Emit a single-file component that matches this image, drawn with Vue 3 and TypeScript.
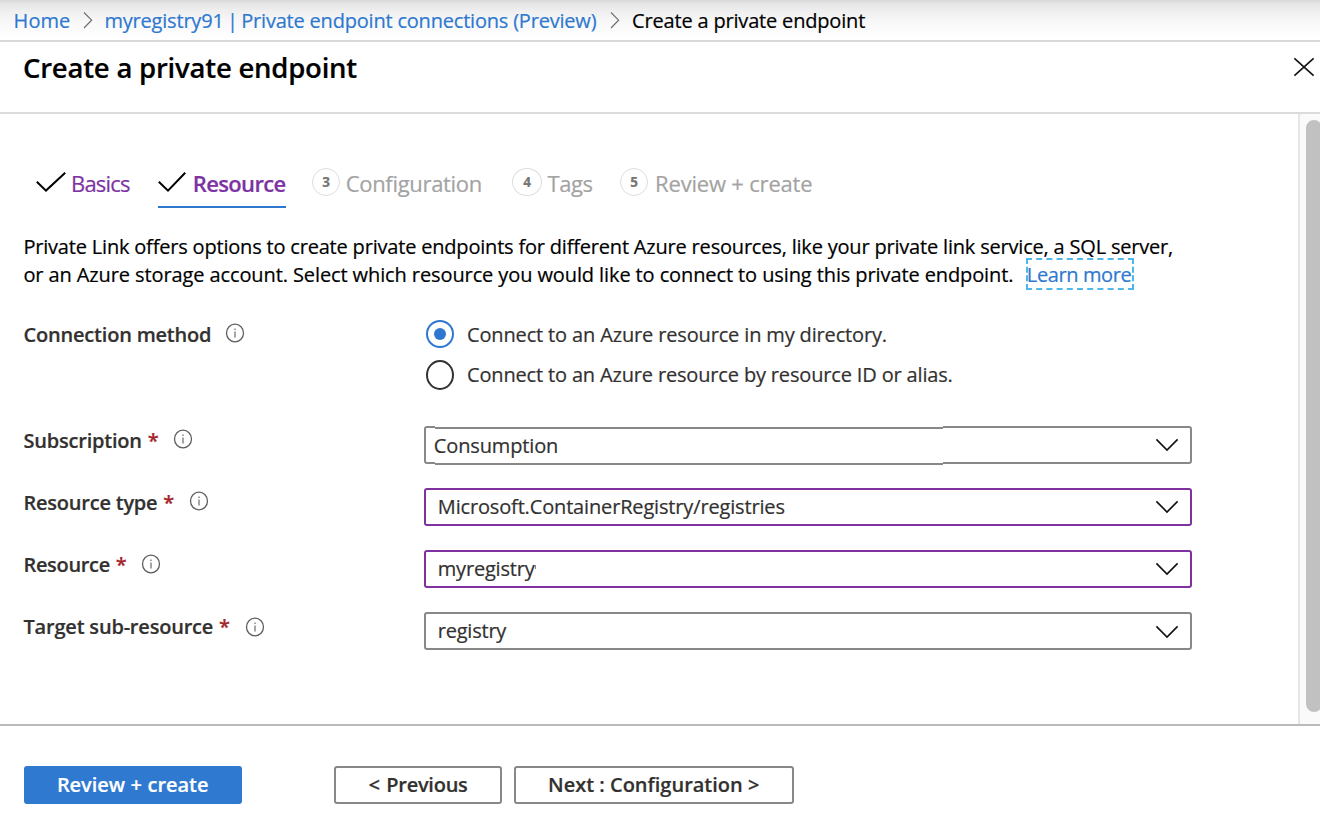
<script setup lang="ts">
import { ref } from 'vue'

interface Tab {
  key: string
  label: string
  state: 'done' | 'active' | 'todo'
  step: number
}

interface Field {
  key: string
  label: string
  value: string
  edited: boolean
}

const tabs: Tab[] = [
  { key: 'basics', label: 'Basics', state: 'done', step: 1 },
  { key: 'resource', label: 'Resource', state: 'active', step: 2 },
  { key: 'configuration', label: 'Configuration', state: 'todo', step: 3 },
  { key: 'tags', label: 'Tags', state: 'todo', step: 4 },
  { key: 'review', label: 'Review + create', state: 'todo', step: 5 },
]

const methods = [
  { key: 'directory', label: 'Connect to an Azure resource in my directory.' },
  { key: 'alias', label: 'Connect to an Azure resource by resource ID or alias.' },
]
const method = ref('directory')

const fields: Field[] = [
  { key: 'subscription', label: 'Subscription', value: 'Consumption', edited: false },
  { key: 'type', label: 'Resource type', value: 'Microsoft.ContainerRegistry/registries', edited: true },
  { key: 'name', label: 'Resource', value: 'myregistry', edited: true },
  { key: 'target', label: 'Target sub-resource', value: 'registry', edited: false },
]
</script>

<template>
  <div class="page">
    <nav class="crumbs">
      <a class="crumb home">Home</a>
      <svg class="sep" width="10" height="18" viewBox="0 0 10 18"><path d="M1 1.5 L8.6 9.2 L1 17" /></svg>
      <a class="crumb registry">myregistry91 <span class="pipe">|</span> Private endpoint connections (Preview)</a>
      <svg class="sep second" width="10" height="18" viewBox="0 0 10 18"><path d="M1 1.5 L8.6 9.2 L1 17" /></svg>
      <span class="crumb here">Create a private endpoint</span>
    </nav>

    <header class="title-bar">
      <h1>Create a private endpoint</h1>
      <svg class="close" width="22" height="20" viewBox="0 0 22 20"><path d="M1.4 1.4 L20.6 18.6 M20.6 1.4 L1.4 18.6" /></svg>
    </header>

    <div class="body">
      <main class="content">
        <div class="tabs">
          <div v-for="t in tabs" :key="t.key" class="tab" :class="[t.state, t.key]">
            <svg v-if="t.state !== 'todo'" class="check" width="30" height="30" viewBox="0 0 30 30">
              <path v-if="t.key === 'basics'" d="M0.8 13.8 L10 22.6 L29.2 4.8" />
              <path v-else d="M0.8 13.8 L10 22.6 L27.2 4.8" />
            </svg>
            <span v-else class="step">{{ t.step }}</span>
            <span class="tab-label">{{ t.label }}</span>
          </div>
        </div>

        <p class="intro">
          <span class="line one">Private Link offers options to create private endpoints for different Azure resources, like your private link service, a SQL server,</span>
          <span class="line two">or an Azure storage account. Select which resource you would like to connect to using this private endpoint.<a class="learn">Learn more</a></span>
        </p>

        <div class="row method-row">
          <div class="label connection">
            <span class="label-text">Connection method</span>
            <svg class="info" width="20" height="20" viewBox="0 0 20 20">
              <ellipse cx="10" cy="10" rx="8.5" ry="8.8" />
              <path d="M10 8.6 V14.4 M10 5.4 V6.9" />
            </svg>
          </div>
          <div class="options">
            <label v-for="m in methods" :key="m.key" class="option" :class="m.key" @click="method = m.key">
              <span class="radio" :class="{ on: method === m.key }"></span>
              <span class="option-text">{{ m.label }}</span>
            </label>
          </div>
        </div>

        <div v-for="f in fields" :key="f.key" class="row" :class="'row-' + f.key">
          <div class="label" :class="f.key">
            <span class="label-text">{{ f.label }}</span>
            <span class="star">*</span>
            <svg class="info" width="20" height="20" viewBox="0 0 20 20">
              <ellipse cx="10" cy="10" rx="8.5" ry="8.8" />
              <path d="M10 8.6 V14.4 M10 5.4 V6.9" />
            </svg>
          </div>
          <div class="select" :class="[f.key, { edited: f.edited }]">
            <span class="value">{{ f.value }}</span>
            <svg class="chev" width="24" height="14" viewBox="0 0 24 14"><path d="M1.4 1.4 L12 12 L22.6 1.4" /></svg>
          </div>
        </div>
      </main>
      <div class="track"><div class="thumb"></div></div>
    </div>

    <footer class="footer">
      <button class="btn primary">Review + create</button>
      <button class="btn prev">&lt; Previous</button>
      <button class="btn next">Next : Configuration &gt;</button>
    </footer>
  </div>
</template>

<style>
body {
  background: #fff;
  overflow: hidden;
}
</style>

<style scoped>
.page {
  box-sizing: border-box;
  width: 1320px;
  height: 820px;
  display: flex;
  flex-direction: column;
  overflow: hidden;
  background: #fff;
  color: #000;
  font: 400 20px/27px "Open Sans", "Noto Sans", sans-serif;
  -webkit-text-stroke: 0.2px currentColor;
}
.page * {
  box-sizing: border-box;
}
svg {
  display: block;
  flex: none;
  fill: none;
}

/* Breadcrumb */
.crumbs {
  height: 42px;
  flex: none;
  display: flex;
  align-items: flex-start;
  padding: 7px 0 0 13.6px;
  border-bottom: 2px solid #d9d9d9;
  background: linear-gradient(#d6d6d6 0, #e4e4e4 3px, #eeeeee 10px, #f8f8f8 22px, #fefefe 36px, #fff 40px);
  white-space: nowrap;
}
.crumb {
  flex: none;
}
a {
  color: #2e78d0;
}
.home {
  width: 56.8px;
  letter-spacing: 0.05px;
}
.registry {
  width: 491.6px;
  letter-spacing: -0.2px;
}
.pipe {
  margin: 0 -1.6px;
}
.here {
  letter-spacing: -0.181px;
}
.sep {
  margin: 4px 11.7px 0 12.4px;
  stroke: #6e6e6e;
  stroke-width: 1.2;
}
.sep.second {
  margin: 4px 12.5px 0 13.5px;
}

/* Title */
.title-bar {
  height: 72px;
  flex: none;
  display: flex;
  justify-content: space-between;
  padding: 7px 5px 0 23px;
  border-bottom: 2px solid #dbdbdb;
}
h1 {
  margin: 0;
  font-size: 27.5px;
  line-height: 37px;
  font-weight: 600;
  letter-spacing: -0.222px;
}
.close {
  margin-top: 8px;
  stroke: #111;
  stroke-width: 1.6;
}

/* Scrolling area */
.body {
  height: 610px;
  flex: none;
  display: flex;
}
.content {
  width: 1298px;
  padding-top: 54px;
}
.track {
  width: 22px;
  padding: 6px 0 0 6px;
  border-left: 2px solid #e6e6e6;
  background: #fafafa;
  overflow: hidden;
}
.thumb {
  width: 16px;
  height: 592px;
  border-radius: 8px;
  background: #c1c1c1;
}

/* Tabs */
.tabs {
  display: grid;
  grid-template-columns: 122px 154px 200px 108px auto;
  justify-content: start;
  height: 40px;
  padding-left: 36px;
  font-size: 22px;
  line-height: 30px;
}
.tab {
  display: flex;
  align-items: flex-start;
  color: #a3a3a3;
  white-space: nowrap;
}
.tab.done,
.tab.active {
  color: #7d33a2;
}
.tab.active {
  width: 128px;
  height: 40px;
  border-bottom: 2px solid #2f78d0;
  font-weight: 600;
}
.check {
  stroke: #000;
  stroke-width: 2;
}
.basics .check {
  margin-right: 5.1px;
}
.basics {
  letter-spacing: -0.84px;
}
.resource .check {
  margin-right: 4.8px;
}
.tab.resource {
  letter-spacing: -0.64px;
}
.step {
  width: 28px;
  height: 28px;
  flex: none;
  border: 1.5px solid #dedede;
  border-radius: 50%;
  color: #767676;
  font-size: 13.5px;
  font-weight: 700;
  line-height: 26px;
  text-align: center;
  letter-spacing: 0;
}
.configuration .step {
  margin-right: 5.7px;
}
.configuration {
  letter-spacing: -0.31px;
}
.tags .step {
  width: 30px;
  margin-right: 5.6px;
}
.tags {
  letter-spacing: -0.45px;
}
.review .step {
  margin-right: 7.1px;
}
.review {
  letter-spacing: -0.19px;
}

/* Intro text */
.intro {
  margin: 25px 0 0;
  padding-left: 23.4px;
  line-height: 28px;
  white-space: nowrap;
}
.line {
  display: flex;
  height: 28px;
}
.one {
  letter-spacing: -0.191px;
}
.two {
  letter-spacing: -0.103px;
}
.learn {
  width: 104px;
  height: 28px;
  margin: -1px 0 0 14.6px;
  padding-top: 1px;
  line-height: 28px;
  text-indent: -1.2px;
  outline: 2px dashed #50b7ea;
  letter-spacing: -0.38px;
}

/* Form rows */
.row {
  display: grid;
  grid-template-columns: 424px 768px;
  height: 62px;
  color: #323130;
}
.method-row {
  height: 106px;
  margin-top: 31px;
}
.label {
  display: flex;
  align-items: flex-start;
  padding: 1px 0 0 23.5px;
  font-weight: 600;
  white-space: nowrap;
}
.connection .label-text {
  width: 188.3px;
  letter-spacing: -0.2px;
}
.connection .info {
  margin-left: 13.2px;
}
.subscription .label-text {
  letter-spacing: -0.22px;
}
.type .label-text {
  letter-spacing: -0.225px;
}
.name .label-text {
  letter-spacing: -0.34px;
}
.target .label-text {
  letter-spacing: -0.2px;
}
.star {
  width: 11px;
  margin-left: 5.9px;
  color: #a4262c;
}
.info {
  margin: 2px 0 0 14.2px;
  stroke: #605e5c;
  stroke-width: 1.3;
}
.info path {
  stroke: #8a8886;
  stroke-width: 1.5;
}
.type .info {
  margin-left: 15px;
}
.name .info {
  margin-top: 3px;
}
.target .info {
  margin: 4px 0 0 15px;
}

/* Radio options */
.options {
  display: flex;
  flex-direction: column;
  gap: 12px;
  padding-left: 2px;
}
.option {
  display: flex;
  align-items: flex-start;
  gap: 13px;
  height: 28px;
  white-space: nowrap;
}
.radio {
  width: 28px;
  height: 28px;
  flex: none;
  display: grid;
  place-items: center;
  border: 2px solid #323130;
  border-radius: 50%;
}
.alias .radio {
  height: 30px;
}
.radio.on {
  border-color: #2f78d0;
}
.radio.on::after {
  content: "";
  width: 12px;
  height: 12px;
  border-radius: 50%;
  background: #2f78d0;
}
.option-text {
  margin-top: 1px;
}
.directory {
  letter-spacing: -0.148px;
}
.alias {
  letter-spacing: -0.16px;
}

/* Drop-downs */
.select {
  position: relative;
  display: flex;
  justify-content: space-between;
  align-items: flex-start;
  height: 38px;
  padding: 3px 11px 0 11.8px;
  border: 2px solid #8a8886;
  border-radius: 3px;
  white-space: nowrap;
}
.select.edited {
  border-color: #8031a0;
}
.chev {
  margin-top: 7px;
  stroke: #111;
  stroke-width: 1.6;
}
.select.target .chev {
  margin-top: 8px;
}
.select.subscription {
  padding-left: 7.8px;
}
/* Inner strip of the subscription box, set one pixel lower than its frame */
.select.subscription::before {
  content: "";
  position: absolute;
  box-sizing: border-box;
  left: 9px;
  top: -1px;
  width: 508px;
  height: 38px;
  border: solid #8a8886;
  border-width: 2px 0;
  background: #fff;
  box-shadow: 0 -1px 0 #fff;
}
.select.subscription .value {
  position: relative;
  margin-top: 1px;
  letter-spacing: -0.135px;
}
.select.type .value {
  letter-spacing: -0.158px;
}
.select.name .value {
  position: relative;
  letter-spacing: -0.2px;
}
.select.name .value::after {
  content: "";
  position: absolute;
  left: 97px;
  top: 10px;
  width: 1px;
  height: 4px;
  background: #8a8886;
}
.select.target .value {
  letter-spacing: -0.23px;
}

/* Footer */
.footer {
  flex: 1;
  display: flex;
  align-items: flex-start;
  padding: 40px 0 0 24px;
  border-top: 2px solid #bababa;
}
.btn {
  height: 38px;
  padding: 3px 0 0;
  border: 2px solid #8a8886;
  border-radius: 3px;
  background: #fff;
  color: #323130;
  font: 600 20px/27px "Open Sans", "Noto Sans", sans-serif;
  text-align: left;
  white-space: nowrap;
  display: flex;
  align-items: flex-start;
}
.primary {
  width: 218px;
  padding-left: 30.9px;
  border-color: #3079d0;
  background: #3079d0;
  color: #fff;
  letter-spacing: -0.04px;
  word-spacing: 0.4px;
}
.prev {
  width: 168px;
  margin-left: 92px;
  padding-left: 32.5px;
  letter-spacing: -0.25px;
  word-spacing: 1.6px;
}
.next {
  width: 280px;
  margin-left: 12px;
  padding-left: 32.1px;
  letter-spacing: -0.01px;
}
</style>
